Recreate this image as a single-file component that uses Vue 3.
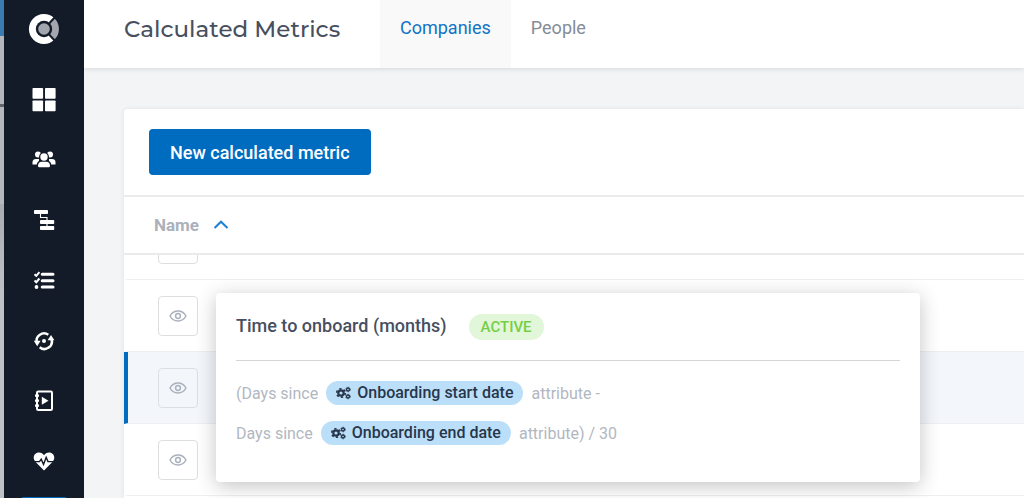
<script setup>
const navItems = [
  { id: 'dashboard', label: 'Dashboard' },
  { id: 'people', label: 'Accounts' },
  { id: 'segments', label: 'Segments' },
  { id: 'tasks', label: 'Tasks' },
  { id: 'lifecycle', label: 'Lifecycle' },
  { id: 'playbooks', label: 'Playbooks' },
  { id: 'health', label: 'Health' },
]

const rows = [
  { id: 1 },
  { id: 2 },
  { id: 3, active: true },
  { id: 4 },
  { id: 5 },
]

const formula = [
  { before: '(Days since', attribute: 'Onboarding start date', after: 'attribute -' },
  { before: 'Days since', attribute: 'Onboarding end date', after: 'attribute) / 30' },
]
</script>

<template>
  <div class="app">
    <div class="backdrop" aria-hidden="true">
      <span class="backdrop-top"></span>
      <span class="backdrop-mid"></span>
      <span class="backdrop-rest"></span>
    </div>

    <aside class="sidebar">
      <a class="logo" href="#" aria-label="Home">
        <svg width="32" height="32" viewBox="0 0 32 32">
          <path d="M23.4 8.2 A10.8 10.8 0 1 0 23.4 23.8" fill="none" stroke="#fff" stroke-width="8.4" />
          <path d="M23.4 8.2 A10.8 10.8 0 0 1 23.4 23.8" fill="none" stroke="#a3a6ae" stroke-width="8.4" />
          <circle cx="16" cy="16" r="8.2" fill="#141b28" />
          <path d="M16 16 L28 3 M16 16 L28 29" stroke="#141b28" stroke-width="2" />
          <circle cx="16" cy="16" r="5.8" fill="#a3a6ae" />
        </svg>
      </a>
      <nav class="nav">
        <a v-for="item in navItems" :key="item.id" class="nav-link" href="#" :aria-label="item.label">
          <svg v-if="item.id === 'dashboard'" width="24" height="24" viewBox="0 0 24 24" fill="#fff">
            <rect x="0.5" y="0" width="10.6" height="10.8" rx="0.8" />
            <rect x="13" y="0" width="10.6" height="10.8" rx="0.8" />
            <rect x="0.5" y="12.4" width="10.6" height="10.8" rx="0.8" />
            <rect x="13" y="12.4" width="10.6" height="10.8" rx="0.8" />
          </svg>
          <svg v-else-if="item.id === 'people'" width="24" height="24" viewBox="0 0 24 24" fill="#fff">
            <circle cx="6" cy="6.5" r="3" />
            <circle cx="18" cy="6.5" r="3" />
            <path d="M0.5 16.5 V14.2 C0.5 12 2 10.9 4 10.9 H7 V13 C5.5 14 5 15 4.8 16.5 Z" />
            <path d="M23.5 16.5 V14.2 C23.5 12 22 10.9 20 10.9 H17 V13 C18.5 14 19 15 19.2 16.5 Z" />
            <circle cx="12" cy="9" r="5" fill="#141b28" />
            <circle cx="12" cy="9" r="3.7" />
            <path d="M6 18 C6 15.3 7.5 13.8 9.7 13.8 H14.3 C16.5 13.8 18 15.3 18 18 C18 18.7 17.6 19.2 17 19.2 H7 C6.400 19.2 6 18.7 6 18 Z" />
          </svg>
          <svg v-else-if="item.id === 'segments'" width="24" height="24" viewBox="0 0 24 24">
            <path d="M8.5 5 V9.5 H15 V18" fill="none" stroke="#fff" stroke-width="1.1" />
            <rect x="2" y="2" width="14" height="4" rx="0.8" fill="#fff" />
            <rect x="8" y="12" width="14.200" height="4" rx="0.8" fill="#fff" />
            <rect x="8" y="18" width="14.200" height="4" rx="0.8" fill="#fff" />
          </svg>
          <svg v-else-if="item.id === 'tasks'" width="24" height="24" viewBox="0 0 24 24" fill="none" stroke="#fff">
            <path d="M10.2 6.3 H21 M10.2 12.7 H21 M10.2 19 H21" stroke-width="3" stroke-linecap="round" />
            <path d="M2.5 6.2 L4.3 7.9 L7.4 4.2 M2.5 12.5 L4.3 14.2 L7.4 10.5" stroke-width="2" />
            <circle cx="4.500" cy="19" r="1.9" fill="#fff" stroke="none" />
          </svg>
          <svg v-else-if="item.id === 'lifecycle'" width="24" height="24" viewBox="0 0 24 24" fill="none" stroke="#fff" stroke-width="2.5">
            <path d="M4.8 14.5 A7.4 7.4 0 0 1 16.3 6.8" />
            <path d="M19.4 11 A7.4 7.4 0 0 1 7.7 19.200" />
            <path d="M1.800 12.8 H8.600 L5.2 18.2 Z M15.6 12.2 H22.400 L19 6.9 Z" fill="#fff" stroke="none" />
            <circle cx="12" cy="13" r="2" fill="#fff" stroke="none" />
          </svg>
          <svg v-else-if="item.id === 'playbooks'" width="24" height="24" viewBox="0 0 24 24" fill="none" stroke="#fff">
            <rect x="5" y="3.5" width="15" height="18.500" rx="1.2" stroke-width="2" />
            <path d="M3 7.7 H7 M3 12.7 H7 M3 17.7 H7" stroke-width="2.2" />
            <path d="M9.8 8.7 V16.7 L16.500 12.7 Z" fill="#fff" stroke="none" />
          </svg>
          <svg v-else width="24" height="24" viewBox="0 0 24 24">
            <path d="M12 22.4 L3.6 14 C-0.3 9.9 2.3 4.4 6.9 4.4 C9.2 4.4 11 5.6 12 7.3 C13 5.6 14.8 4.4 17.1 4.4 C21.7 4.4 24.3 9.900 20.4 14 Z" fill="#fff" />
            <path d="M1.5 13.6 H7.5 L9.2 11.2 L11.5 16.400 L14.2 9.400 L16 13.6 H22.5" fill="none" stroke="#141b28" stroke-width="1.4" />
          </svg>
        </a>
      </nav>
      <span class="sidebar-footer"></span>
    </aside>

    <div class="main">
      <header class="header">
        <h1 class="title">Calculated Metrics</h1>
        <nav class="tabs">
          <a class="tab tab-active" href="#companies" aria-current="page">Companies</a>
          <a class="tab" href="#people">People</a>
        </nav>
      </header>

      <main class="content">
        <section class="card">
          <div class="toolbar">
            <button class="primary" type="button">New calculated metric</button>
          </div>
          <div class="list-head">
            <button class="sort" type="button">
              Name
              <svg width="16" height="10" viewBox="0 0 16 10">
                <path d="M1.5 8 L8 1.700 L14.5 8" fill="none" stroke="#1c82d4" stroke-width="2" />
              </svg>
            </button>
          </div>
          <div class="rows">
            <div v-for="row in rows" :key="row.id" class="row" :class="{ 'row-active': row.active }">
              <button class="eye" type="button" aria-label="Preview metric">
                <svg width="18" height="12" viewBox="0 0 18 12" fill="none" stroke="#aab1bc" stroke-width="1.5">
                  <path d="M1 6 C4.7 -0.7 13.3 -0.7 17 6 C13.3 12.7 4.7 12.7 1 6 Z" />
                  <circle cx="9" cy="6" r="2.400" />
                </svg>
              </button>
            </div>
          </div>

          <article class="popover">
            <div class="popover-head">
              <h2 class="metric">Time to onboard (months)</h2>
              <span class="badge">ACTIVE</span>
            </div>
            <p v-for="line in formula" :key="line.attribute" class="line">
              <span>{{ line.before }}</span>
              <span class="pill">
                <svg width="15" height="14" viewBox="0 0 15 14" fill="none" stroke="#28364b">
                  <circle cx="5" cy="7" r="4.3" stroke-width="1.6" stroke-dasharray="2.25 2.25" />
                  <circle cx="5" cy="7" r="2.7" stroke-width="2.2" />
                  <circle cx="12" cy="3.5" r="1.5" stroke-width="1.4" />
                  <circle cx="12" cy="10.5" r="1.5" stroke-width="1.4" />
                  <circle cx="12" cy="3.5" r="2.3" stroke-width="0.8" stroke-dasharray="1.2 1.2" />
                  <circle cx="12" cy="10.5" r="2.3" stroke-width="0.8" stroke-dasharray="1.2 1.2" />
                </svg>
                {{ line.attribute }}
              </span>
              <span>{{ line.after }}</span>
            </p>
          </article>
        </section>
      </main>
    </div>
  </div>
</template>

<style>
body {
  margin: 0;
}
</style>

<style scoped>
.app {
  display: flex;
  height: 100vh;
  overflow: hidden;
  background: #f3f4f6;
  font-family: Roboto, "Liberation Sans", sans-serif;
  font-size: 17px;
  color: #474f5f;
}

a {
  text-decoration: none;
}

button {
  font: inherit;
  border: 0;
  padding: 0;
  cursor: pointer;
}

.backdrop {
  display: flex;
  flex-direction: column;
  flex: none;
  width: 4px;
}

.backdrop-top {
  height: 36px;
  background: #3a7cb0;
}

.backdrop-mid {
  height: 68px;
  background: #b4b8bc;
  border-bottom: 3px solid #5f6670;
}

.backdrop-rest {
  flex: 1;
  background: linear-gradient(#b5b9bd, #b5b9bd 97px, #a9adb3 97px, #bfc2c5 190px);
}

.sidebar {
  display: flex;
  flex-direction: column;
  align-items: center;
  flex: none;
  width: 80px;
  background: #141b28;
}

.logo {
  display: flex;
  flex: none;
  align-items: center;
  height: 58px;
  margin-bottom: 12px;
}

.nav {
  display: flex;
  flex-direction: column;
  flex: none;
}

.nav-link {
  display: flex;
  align-items: center;
  justify-content: center;
  width: 80px;
  height: 60px;
}

.sidebar-footer {
  flex: none;
  width: 48px;
  height: 40px;
  margin-top: 7px;
  border-radius: 4px;
  background: #006cbf;
}

.main {
  display: flex;
  flex-direction: column;
  flex: 1;
  min-width: 0;
}

.header {
  display: flex;
  flex: none;
  background: #fff;
  box-shadow: 0 1px 5px rgba(0, 0, 0, 0.12);
  line-height: 56px;
}

.title {
  width: 256px;
  box-sizing: border-box;
  margin: 0 40px 0 0;
  padding-left: 40px;
  font-family: Montserrat, Inter, sans-serif;
  font-size: 23px;
  font-weight: 500;
  line-height: 58px;
  white-space: nowrap;
}

.tabs {
  display: flex;
}

.tab {
  padding: 0 20px 12px;
  font-size: 18px;
  color: #858c97;
}

.tab-active {
  background: #f9f9f9;
  color: #1274c5;
}

.content {
  display: flex;
  flex: 1;
  min-height: 0;
  padding: 41px 0 0 40px;
}

.card {
  position: relative;
  display: flex;
  flex-direction: column;
  flex: 1;
  min-width: 0;
  background: #fff;
  border-radius: 4px 0 0 0;
  box-shadow: 0 0 5px rgba(0, 0, 0, 0.08);
}

.toolbar {
  padding: 20px 25px;
  border-bottom: 2px solid #ebebed;
}

.primary {
  height: 46px;
  padding: 0 21px;
  border-radius: 4px;
  background: #006cbf;
  color: #fff;
  font-size: 18px;
  font-weight: 500;
}

.list-head {
  display: flex;
  align-items: center;
  height: 56px;
  padding: 0 30px;
  border-bottom: 2px solid #ebebed;
}

.sort {
  display: flex;
  align-items: center;
  gap: 14px;
  background: none;
  color: #abb1ba;
  font-weight: 700;
}

.rows {
  flex: 1;
  min-height: 0;
  overflow: hidden;
}

.row {
  display: flex;
  align-items: center;
  box-sizing: border-box;
  height: 72px;
  padding-left: 30px;
  border-left: 4px solid transparent;
  border-bottom: 1px solid #efeff1;
}

.row:first-child {
  margin-top: -47px;
}

.row-active {
  background: #f3f7fc;
  border-left-color: #006cbf;
}

.eye {
  display: flex;
  align-items: center;
  justify-content: center;
  width: 40px;
  height: 40px;
  border: 1px solid #dcdfe2;
  border-radius: 4px;
  background: transparent;
}

.popover {
  position: absolute;
  top: 184px;
  left: 92px;
  right: 104px;
  padding: 0 20px 29px;
  background: #fff;
  border-radius: 4px;
  box-shadow: 0 4px 20px rgba(0, 0, 0, 0.24);
}

.popover-head {
  display: flex;
  align-items: center;
  gap: 22px;
  height: 67px;
  margin-bottom: 12px;
  border-bottom: 1px solid #d4d5d7;
}

.metric {
  margin: 0;
  padding-bottom: 2px;
  font-size: 18px;
  font-weight: 500;
}

.badge {
  padding: 0 12px;
  border-radius: 13px;
  background: #e2f6d9;
  color: #75cf45;
  font-size: 15px;
  font-weight: 500;
  line-height: 26px;
}

.line {
  display: flex;
  align-items: center;
  gap: 8px;
  height: 40px;
  margin: 0;
  font-size: 16px;
  color: #b2b7bf;
}

.pill {
  display: flex;
  align-items: center;
  gap: 6px;
  padding: 0 10px;
  border-radius: 12px;
  background: #bbdff9;
  color: #28364b;
  font-weight: 500;
  line-height: 24px;
}
</style>
